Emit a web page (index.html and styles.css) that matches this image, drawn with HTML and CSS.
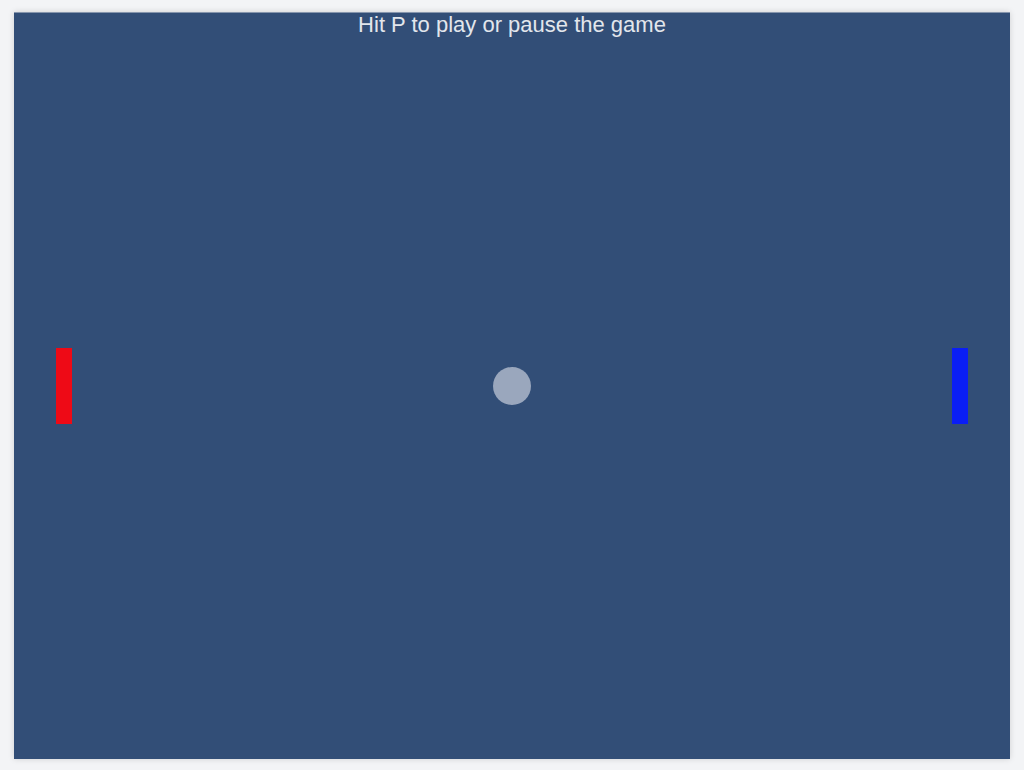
FILE: index.html
```html
<!DOCTYPE html>
<html>
<head>
<meta charset="utf-8">
<link rel="stylesheet" href="styles.css">
</head>
<body>
<main class="board">
  <p class="hint">Hit P to play or pause the game</p>
  <div class="paddle paddle-left"></div>
  <div class="ball"></div>
  <div class="paddle paddle-right"></div>
</main>
</body>
</html>
```
FILE: styles.css
```css
html, body {
  margin: 0;
  height: 100%;
}
body {
  background: #f3f4f6;
  display: flex;
  align-items: center;
  justify-content: center;
  font-family: "Liberation Sans", Arial, sans-serif;
}
.board {
  position: relative;
  width: 996px;
  height: 747px;
  background: #324e77;
  box-shadow: 0 0 6px rgba(0,0,0,0.15);
  border-top: 1px solid #8796ad;
  box-sizing: border-box;
  display: flex;
  align-items: center;
  justify-content: space-between;
  padding: 0 42px;
}
.hint {
  position: absolute;
  top: 0;
  left: 0;
  right: 0;
  margin: 0;
  text-align: center;
  color: #e2e6ec;
  font-size: 22px;
  line-height: 23px;
}
.paddle {
  width: 16px;
  height: 76px;
}
.paddle-left { background: #ee0a16; }
.paddle-right { background: #0a1ef5; }
.ball {
  width: 38px;
  height: 38px;
  border-radius: 50%;
  background: #9aa7bd;
}
```
